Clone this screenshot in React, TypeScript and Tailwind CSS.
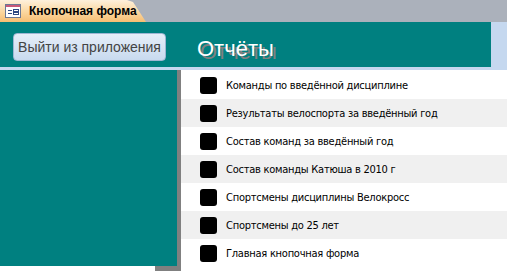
import React from "react";

const items = [
  "Команды по введённой дисциплине",
  "Результаты велоспорта за введённый год",
  "Состав команд за введённый год",
  "Состав команды Катюша в 2010 г",
  "Спортсмены дисциплины Велокросс",
  "Спортсмены до 25 лет",
  "Главная кнопочная форма",
];

function FormIcon() {
  return (
    <svg width="16" height="14" viewBox="0 0 16 14">
      <rect x="0.5" y="0.5" width="15" height="13" fill="#ffffff" stroke="#6b7894" />
      <rect x="1" y="1" width="14" height="2" fill="#c8587a" />
      <rect x="3" y="6" width="4" height="1" fill="#2f4a84" />
      <rect x="3" y="9" width="4" height="1" fill="#2f4a84" />
      <rect x="8.5" y="5.5" width="5" height="2" fill="#ffffff" stroke="#2f4a84" />
      <rect x="8.5" y="8.5" width="5" height="2" fill="#ffffff" stroke="#2f4a84" />
    </svg>
  );
}

export default function App() {
  return (
    <div className="w-[507px] h-[271px] overflow-hidden bg-white flex flex-col" style={{ fontFamily: '"Liberation Sans", Arial, sans-serif' }}>
      {/* tab bar */}
      <div className="h-[22px] bg-[#abb1bb] flex items-end shrink-0">
        <div className="h-[22px] w-[146px] bg-gradient-to-b from-[#fdf0dc] via-[#fbd9a4] to-[#f6be72] flex items-center [clip-path:polygon(0_0,127px_0,133px_2px,137px_8px,146px_22px,0_22px)]">
          <div className="ml-[5px]">
            <FormIcon />
          </div>
          <span className="ml-[8px] text-[12px] font-bold text-black leading-none">Кнопочная форма</span>
        </div>
      </div>
      {/* header */}
      <div className="h-[48px] bg-[#c5d8ef] shrink-0">
        <div className="w-[491px] h-[45px] bg-[#008080] flex items-start">
          <button className="ml-[13px] mt-[11px] w-[153px] h-[28px] rounded-[4px] border border-[#9fb6d3] bg-gradient-to-b from-[#e6eef8] to-[#c8daef] text-[14px] text-[#444444] leading-none flex items-center justify-center">
            Выйти из приложения
          </button>
          <div className="ml-[31px] mt-[16px] text-[22px] leading-none text-white [text-shadow:3px_3px_0_#808080]">Отчёты</div>
        </div>
      </div>
      {/* body */}
      <div className="flex flex-1">
        <div className="w-[181px] flex flex-col shrink-0">
          <div className="flex">
            <div className="w-[177px] h-[196px] bg-[#008080]" />
            <div className="w-[4px] h-[196px] bg-[#808080]" />
          </div>
          <div className="ml-[155px] w-[26px] h-[5px] bg-[#808080]" />
        </div>
        <div className="flex-1 pt-[1px] flex flex-col">
          {items.map((t, i) => (
            <div key={t} className={`h-[28px] flex items-center ${i % 2 === 1 ? "bg-[#f0f0f0]" : "bg-white"}`}>
              <div className="ml-[19px] w-[17px] h-[17px] rounded-[3px] bg-black shrink-0" />
              <span className="ml-[9px] text-[11px] tracking-[-0.25px] text-black leading-none" style={{ fontFamily: '"DejaVu Sans Condensed", "DejaVu Sans", sans-serif' }}>{t}</span>
            </div>
          ))}
        </div>
      </div>
    </div>
  );
}
